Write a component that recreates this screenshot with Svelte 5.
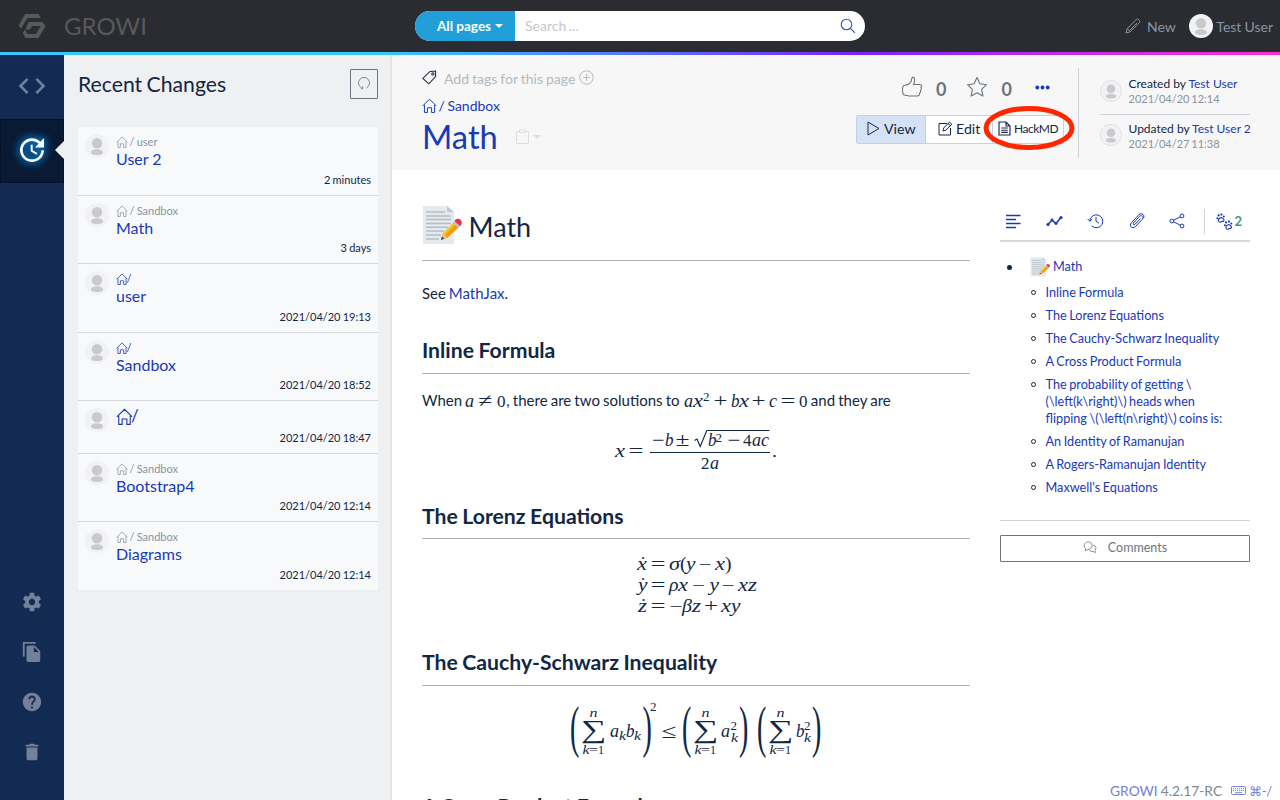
<script>
  const changes = [
    { parent: ' / user', title: 'User 2', time: '2 minutes', h: 69 },
    { parent: ' / Sandbox', title: 'Math', time: '3 days', h: 68 },
    { parent: '/', title: 'user', time: '2021/04/20 19:13', h: 69, link: true },
    { parent: '/', title: 'Sandbox', time: '2021/04/20 18:52', h: 68, link: true },
    { parent: '', title: '/', time: '2021/04/20 18:47', h: 53, root: true },
    { parent: ' / Sandbox', title: 'Bootstrap4', time: '2021/04/20 12:14', h: 68 },
    { parent: ' / Sandbox', title: 'Diagrams', time: '2021/04/20 12:14', h: 68 }
  ];
  const toc = [
    'Inline Formula', 'The Lorenz Equations', 'The Cauchy-Schwarz Inequality', 'A Cross Product Formula',
    'The probability of getting \\(\\left(k\\right)\\) heads when flipping \\(\\left(n\\right)\\) coins is:',
    'An Identity of Ramanujan', 'A Rogers-Ramanujan Identity', "Maxwell's Equations"
  ];

  // Formula glyphs: [text, x, baseline, advance, size, italic]
  const v = (t, x, y, w = 9, s = 18) => [t, x, y, w, s, true];
  const r = (t, x, y, w = 8, s = 17) => [t, x, y, w, s, false];
  const nonzero = [v('a', 1, 17), r('≠', 14, 17, 14, 19), r('0', 33, 17, 8.5)];
  const quadratic = [
    v('a', 1, 17), v('x', 10, 17, 10), r('2', 20, 11, 6.5, 12), r('+', 30.5, 17, 14, 19), v('b', 48, 17, 8.5),
    v('x', 56, 17, 10), r('+', 68.5, 17, 14, 19), v('c', 86, 17, 8), r('=', 97.5, 17, 15, 19), r('0', 116, 17, 8.5)
  ];
  const roots = [
    v('x', 5, 32, 10), r('=', 18.5, 32, 15, 19), r('−', 42, 21, 12.5, 18), v('b', 55, 21, 8.5), r('±', 65.5, 21, 14, 18),
    v('b', 98, 21, 8.5), r('2', 105.5, 16.5, 6.5, 12), r('−', 117.5, 21, 13, 18), r('4', 133, 21, 8.5), v('a', 142, 21),
    v('c', 151, 21, 8), r('2', 91, 44, 8.5), v('a', 100, 44), r('.', 162, 32, 5, 17)
  ];
  const lorenz = [
    v('x', 7, 20, 10), r('˙', 10, 20, 6, 18), r('=', 20.5, 20, 15, 19), v('σ', 39, 20, 11), r('(', 50, 20, 6.5, 19), v('y', 56, 20, 9.5),
    r('−', 68.5, 20, 13), v('x', 85, 20, 10), r(')', 95, 20, 6.5, 19),
    v('y', 8, 41, 9.5), r('˙', 10, 41, 6, 18), r('=', 20.5, 41, 15, 19), v('ρ', 39, 41, 9.5), v('x', 48, 41, 10), r('−', 62, 41, 13),
    v('y', 79.5, 41, 9.5), r('−', 91.5, 41, 13), v('x', 108, 41, 10), v('z', 118, 41, 9),
    v('z', 8, 62, 9), r('˙', 10.5, 62, 6, 18), r('=', 20.5, 62, 15, 19), r('−', 39.5, 62, 13), v('β', 52, 62, 10), v('z', 62, 62, 9),
    r('+', 74, 62, 14, 19), v('x', 91, 62, 10), v('y', 101, 62, 9.5)
  ];
  const sum = (x) => [
    r('∑', x - 1, 38, 25.5, 26), v('n', x + 7.5, 17, 8, 12.5), v('k', x + 0.5, 54, 7, 12.5), r('=', x + 7, 54, 9, 12), r('1', x + 16, 54, 6, 12)
  ];
  const cauchy = [
    ...sum(12), v('a', 40, 37), v('k', 49, 39.5, 7, 12.5), v('b', 56, 37, 8.5), v('k', 64, 39.5, 7, 12.5),
    r('2', 80, 11, 6.5, 12), r('≤', 91.5, 38, 15, 20),
    ...sum(124), v('a', 151, 37), r('2', 160.5, 30, 6.5, 12), v('k', 161, 42, 7, 12.5),
    ...sum(199), v('b', 226, 37, 8.5), r('2', 234, 30, 6.5, 12), v('k', 234, 42, 7, 12.5)
  ];
  // Tall delimiters around the sums: [text, x]
  const delimiters = [['(', 0], [')', 72.5], ['(', 112], [')', 169], ['(', 187], [')', 242]];
</script>

{#snippet home(size)}
  <svg class="home" width={size} height={size} viewBox="0 0 16 16" fill="none" stroke="currentColor" stroke-width="1.05">
    <path d="M.8 8.4 8 1.200l7.200 7.200M2.600 7.200v8.200h3.200v-5h4.400v5h3.200V7.200" />
  </svg>
{/snippet}
{#snippet person(size)}
  <svg class="person" width={size} height={size} viewBox="0 0 24 24">
    <circle cx="12" cy="12" r="12" fill="#f1f2f5" /><circle cx="12" cy="9.300" r="5.200" fill="#cacaca" />
    <path d="M6 18.600c0-2.200 2.600-3.400 6-3.400s6 1.200 6 3.400c0 1.700-2.600 2.500-6 2.500s-6-.8-6-2.500Z" fill="#cacaca" />
  </svg>
{/snippet}
{#snippet memo(size)}
  <svg class="memo" width={size} height={size} viewBox="0 0 40 40">
    <path d="M1 1h24l7 6v32H1Z" fill="#e4eaee" /><path d="M25 1v6h7Z" fill="#bccad2" />
    <path d="M4 7h19M4 11h25M4 14.600h25M4 18.400h25M4 22.200h22M4 26h18M4 30h15M4 34h13" stroke="#b2bec5" stroke-width="1.500" />
    <path d="m19 34 2-6 12-12 5 5-13 12Z" fill="#f9c21a" /><path d="m23 30 12-12 3 3-13 12Z" fill="#ef9b12" />
    <path d="m19 35 2-7 5 5Z" fill="#e5bf8f" /><path d="m19 35 .9-3.400 2.500 2.100Z" fill="#444" />
    <path d="m31 18 2-2.500 5 5-2.300 2.200Z" fill="#b7c4ca" /><path d="M32.500 16c1-2.400 4-3 6-1.200 2 1.900 1.600 4.700-.5 6.200Z" fill="#ef2d43" />
  </svg>
{/snippet}
{#snippet glyphs(items)}
  {#each items as [t, x, y, w, s, it]}
    <text {x} {y} font-size={s} font-style={it ? 'italic' : 'normal'} textLength={w} lengthAdjust="spacingAndGlyphs">{t}</text>
  {/each}
{/snippet}

<div class="app">
  <header>
    <div class="brand">
      <svg width="28" height="26" viewBox="0 0 28 26" fill="#57595b">
        <path d="M7 1h13.500l2.300 4H9.500L3.200 15.500.5 12.700Z" />
        <path d="M10.500 9h14.200l2.800 4-7 12H7.500L4.800 20l2-3.500 2.700 4.500h8.500l4.700-8h-8.500l-2.300 3.500H7.500Z" />
      </svg>
      <span>GROWI</span>
    </div>
    <div class="search">
      <div class="scope">All pages<i class="caret"></i></div>
      <div class="query">Search ...</div>
      <svg width="16" height="16" viewBox="0 0 16 16" fill="none" stroke="#3553c5" stroke-width="1.100"><circle cx="6.500" cy="6.500" r="5.300" /><path d="m10.500 10.500 4.500 4.300" /></svg>
    </div>
    <div class="account">
      <svg width="16" height="16" viewBox="0 0 16 16" fill="none" stroke="#8b95a1"><path d="M1 15l1.300-4.500L11.500 1.300c1.200-1 4.200 1.600 3.100 3.200L5.200 13.800ZM2.300 10.500l3 3.200M12 5 5 12" /></svg>
      <span class="new">New</span>{@render person(24)}<span class="me">Test User</span>
    </div>
  </header>
  <div class="rainbow"></div>

  <div class="columns">
    <nav>
      <div class="tab"><svg width="32" height="32" viewBox="0 0 24 24"><path d="M9.400 16.600L4.800 12l4.600-4.600L8 6l-6 6 6 6 1.400-1.400zm5.200 0l4.600-4.600-4.600-4.600L16 6l6 6-6 6-1.400-1.400z" /></svg></div>
      <div class="tab on"><svg width="32" height="32" viewBox="0 0 24 24"><path d="M21 10.120h-6.780l2.740-2.820c-2.730-2.700-7.150-2.800-9.880-.1-2.730 2.710-2.730 7.080 0 9.790s7.150 2.710 9.880 0C18.320 15.650 19 14.080 19 12.100h2c0 1.980-.88 4.550-2.640 6.290-3.510 3.480-9.210 3.480-12.720 0-3.500-3.470-3.530-9.110-.02-12.580s9.140-3.470 12.650 0L21 3v7.120zM12.500 8v4.250l3.500 2.080-.72 1.210L11 13V8h1.500z" /></svg></div>
      <div class="tools">
        <svg width="22" height="22" viewBox="0 0 24 24"><path d="M19.430 12.980c.04-.32.07-.64.07-.98s-.03-.66-.07-.98l2.110-1.650c.19-.15.24-.42.12-.64l-2-3.460c-.12-.22-.39-.3-.61-.22l-2.490 1c-.52-.4-1.080-.73-1.690-.98l-.38-2.650C14.460 2.180 14.250 2 14 2h-4c-.25 0-.46.180-.49.420l-.38 2.650c-.61.25-1.170.59-1.690.98l-2.490-1c-.23-.09-.49 0-.61.22l-2 3.460c-.13.22-.07.49.12.64l2.110 1.650c-.04.32-.07.65-.07.98s.03.66.07.98l-2.110 1.650c-.19.15-.24.42-.12.64l2 3.460c.12.22.39.3.61.22l2.490-1c.52.4 1.080.73 1.690.98l.38 2.650c.03.24.24.42.49.42h4c.25 0 .46-.18.49-.42l.38-2.650c.61-.25 1.170-.59 1.690-.98l2.490 1c.23.09.49 0 .61-.22l2-3.460c.12-.22.07-.49-.12-.64l-2.110-1.650zM12 15.500c-1.930 0-3.500-1.570-3.500-3.500s1.570-3.500 3.500-3.500 3.500 1.570 3.500 3.500-1.570 3.500-3.500 3.500z" /></svg>
        <svg width="22" height="22" viewBox="0 0 24 24"><path d="M16 1H2v16h2V3h12V1zm-1 4l6 6v10c0 1.100-.9 2-2 2H7.990C6.890 23 6 22.100 6 21V7c0-1.100.89-2 1.990-2h7zm-1 7h5.500L14 6.500V12z" /></svg>
        <svg width="22" height="22" viewBox="0 0 24 24"><path d="M12 2C6.480 2 2 6.480 2 12s4.480 10 10 10 10-4.480 10-10S17.520 2 12 2zm1 17h-2v-2h2v2zm2.070-7.750l-.9.92C13.450 12.900 13 13.500 13 15h-2v-.5c0-1.100.45-2.100 1.170-2.830l1.240-1.260c.37-.36.59-.86.59-1.410 0-1.100-.9-2-2-2s-2 .9-2 2H8c0-2.210 1.790-4 4-4s4 1.790 4 4c0 .88-.36 1.680-.93 2.250z" /></svg>
        <svg width="22" height="22" viewBox="0 0 24 24"><path d="M6 19c0 1.100.9 2 2 2h8c1.100 0 2-.9 2-2V7H6v12zM19 4h-3.500l-1-1h-5l-1 1H5v2h14V4z" /></svg>
      </div>
    </nav>

    <aside>
      <div class="panel-head">
        <h3>Recent Changes</h3>
        <button class="reload" aria-label="Reload"><svg width="14" height="14" viewBox="0 0 14 14" fill="none" stroke="#7d8793"><path d="M4.600 11.900a5.500 5.500 0 1 1 4.800 0M5.300 10.200l.9 2-2.200 1" /></svg></button>
      </div>
      <div class="changes">
        {#each changes as c}
          <div class="change" style:height="{c.h}px">
            {@render person(24)}
            <div class="info">
              {#if c.root}
                <div class="title root">{@render home(17)}{c.title}</div>
              {:else}
                <div class="parent" class:link={c.link}>{@render home(12)}<span>{c.parent}</span></div>
                <div class="title">{c.title}</div>
              {/if}
              <div class="time">{c.time}</div>
            </div>
          </div>
        {/each}
      </div>
    </aside>

    <main>
      <section class="subnav">
        <div class="page-id">
          <div class="tags">
            <svg width="15" height="15" viewBox="0 0 16 16" fill="none" stroke="#16294a" stroke-width="1.100"><path d="M8.500 1.500 14.500 1v6L7.300 14.800.9 9Z" /><circle cx="11.600" cy="4.200" r="1.200" /></svg>
            <span>Add tags for this page</span>
            <svg width="15" height="15" viewBox="0 0 15 15" fill="none" stroke="#b2bac2"><circle cx="7.500" cy="7.500" r="6.700" /><path d="M7.500 4v7M4 7.500h7" /></svg>
          </div>
          <div class="crumb">{@render home(15)}<span>/ Sandbox</span></div>
          <div class="name"><h1>Math</h1>
            <svg width="13" height="15" viewBox="0 0 13 15" fill="none" stroke="#dcdfe2"><path d="M3.500 2.500H.5v12h12v-12h-3M3.500 1h6v2.500h-6Z" /></svg><i class="caret"></i>
          </div>
        </div>
        <div class="actions">
          <div class="reacts">
            <svg width="22" height="22" viewBox="0 0 22 22" fill="none" stroke="#6c757d" stroke-width="1.100"><path d="M1.500 13.500c0-3 .6-4.300 2.500-4.300 2.400 0 3.800-.8 4.700-2l1.500-2.100c.6-1 .1-3.400 1.300-3.700 1.900-.4 2.500 2 2 4l-.8 3.100h6.200c1.800 0 2.200 2 1 3 .8 1 .6 2-.3 2.800.4 1.200 0 2.100-.9 2.600.1 2-.8 3.100-2.500 3.100H8c-1.600 0-2.500-.8-4-.8s-2.500-1.500-2.500-5.700Z" /></svg>
            <b>0</b>
            <svg width="22" height="22" viewBox="0 0 22 22" fill="none" stroke="#6c757d" stroke-width="1.100" stroke-linejoin="round"><path d="m11 1.500 2.900 6.300 6.600.9-4.900 4.700 1.300 6.700-5.900-3.300-5.900 3.300 1.300-6.700L1.500 8.700l6.600-.9Z" /></svg>
            <b>0</b>
            <svg class="more" width="15" height="5" viewBox="0 0 15 5" fill="#1939b7"><circle cx="2.300" cy="2.500" r="1.900" /><circle cx="7.500" cy="2.500" r="1.900" /><circle cx="12.700" cy="2.500" r="1.900" /></svg>
          </div>
          <div class="modes">
            <div class="mode view"><svg width="13" height="15" viewBox="0 0 13 15" fill="none" stroke="#16294a"><path d="m1 1 11 6.500L1 14Z" /></svg>View</div>
            <div class="mode edit"><svg width="15" height="15" viewBox="0 0 15 15" fill="none" stroke="#16294a"><path d="M9 2.500H1v11.500h11.500V7M5 10l.7-3 5.800-6 2.300 2.200L8 9.200ZM10 2.500l2.300 2.200" /></svg>Edit</div>
            <div class="mode hack"><svg width="13" height="15" viewBox="0 0 13 15" fill="none" stroke="#16294a" stroke-width="1.150"><path d="M1 1h7l4 4v9H1ZM8 1v4h4M3.300 7h6.500M3.300 9.200h6.500M3.300 11.400h6.500" /></svg>HackMD</div>
            <svg class="ring" width="92" height="46" viewBox="0 0 92 46"><ellipse cx="46" cy="23" rx="43" ry="19.500" fill="none" stroke="#ff2600" stroke-width="5" /></svg>
          </div>
        </div>
        <div class="authors">
          <div class="author"><span class="ringed">{@render person(20)}</span><div><p>Created by <a href="#u">Test User</a></p><small>2021/04/20 12:14</small></div></div>
          <div class="author"><span class="ringed">{@render person(20)}</span><div><p>Updated by <a href="#u">Test User 2</a></p><small>2021/04/27 11:38</small></div></div>
        </div>
      </section>

      <div class="body">
        <article>
          <div class="h1">{@render memo(40)}<span>Math</span></div>
          <p class="see">See <a href="#m">MathJax</a>.</p>
          <h2>Inline Formula</h2>
          <p class="when">When <svg class="math" width="42" height="24">{@render glyphs(nonzero)}</svg>, there are two solutions to <svg class="math" width="125" height="24">{@render glyphs(quadratic)}</svg> and they are</p>
          <svg class="math display" style:margin-left="188px" width="170" height="54">
            {@render glyphs(roots)}
            <path d="M40 27.500h120M96.500 5.500h63" stroke="currentColor" /><path d="m84.500 15.500 2.500-1.500 3.200 7.500 6.600-16" fill="none" stroke="currentColor" stroke-width="1.100" />
          </svg>
          <h2 class="lor">The Lorenz Equations</h2>
          <svg class="math display" style:margin-left="208px" width="135" height="74">{@render glyphs(lorenz)}</svg>
          <h2 class="cau">The Cauchy-Schwarz Inequality</h2>
          <svg class="math display" style:margin-left="148px" width="256" height="62">
            {@render glyphs(cauchy)}
            {#each delimiters as [t, x]}<text transform="translate({x} 46) scale(1.400 2.850)" font-size="20">{t}</text>{/each}
          </svg>
          <h2 class="cross">A Cross Product Formula</h2>
        </article>

        <div class="side">
          <div class="tabs">
            <svg width="16" height="16" viewBox="0 0 16 16" stroke="#1939b7" stroke-width="1.300"><path d="M1 2.500h14.500M1 6.500h10M1 10.500h14.500M1 14.500h10" /></svg>
            <svg width="17" height="12" viewBox="0 0 17 12" fill="#1939b7"><path d="m2 9.500 4-4.500 4 3.500 5-6" fill="none" stroke="#1939b7" stroke-width="1.600" /><circle cx="2" cy="9.500" r="1.600" /><circle cx="6" cy="5" r="1.400" /><circle cx="10" cy="8.500" r="1.400" /><circle cx="15" cy="2.500" r="1.600" /></svg>
            <svg width="17" height="16" viewBox="0 0 17 16" fill="none" stroke="#1939b7"><path d="M2.800 8a6.500 6.500 0 1 1 2 5M.7 6l2.100 2.300L5.200 6M9 4v4.200l3 2" /></svg>
            <svg width="16" height="16" viewBox="0 0 16 16" fill="none" stroke="#1939b7"><path d="M11.500 5.500 6 11.400c-1.100 1-2.500-.1-1.600-1.400L10.500 3.400c2-2 4.800.4 3 2.700L6.300 13.700c-2.800 2.800-6.800-.7-4-3.900L10 1.600c3-2.500 6.300 1 4.300 3.700" /></svg>
            <svg width="16" height="16" viewBox="0 0 16 16" fill="none" stroke="#1939b7"><circle cx="2.800" cy="8" r="1.900" /><circle cx="13" cy="3" r="1.900" /><circle cx="13" cy="13" r="1.900" /><path d="m4.600 7.200 6.600-3.300M4.600 8.800l6.600 3.300" /></svg>
            <i class="bar"></i>
            <svg width="17" height="17" viewBox="0 0 17 17" fill="none" stroke="#1939b7" stroke-width="1.100">
              <g id="paw"><path d="M2.500 8c-.3-1.700.8-3 2.200-3.300 1.500-.2 2.300.6 3 1.600.7 1 0 2.200-1.200 2-1 0-1.200.7-2.100.9-1 .2-1.700-.2-1.900-1.200Z" /><g fill="#1939b7" stroke="none"><circle cx="1.300" cy="5.300" r="1" /><circle cx="2.600" cy="2.400" r="1.100" /><circle cx="5.400" cy="1.600" r="1.100" /><circle cx="7.800" cy="3.500" r="1" /></g></g>
              <use href="#paw" x="7.500" y="7" />
            </svg>
            <b>2</b>
          </div>
          <div class="toc">
            <div class="top"><i class="dot"></i>{@render memo(20)}<a href="#t">Math</a></div>
            {#each toc as t}<div class="entry"><i class="circle"></i><a href="#t">{t}</a></div>{/each}
          </div>
          <hr />
          <button class="comments"><svg width="14" height="13" viewBox="0 0 14 13" fill="none" stroke="#7b858f" stroke-width=".9"><path d="M2.200 9.800 2.700 7.700A4 3.800 0 1 1 5 8.500ZM10.300 4A3.300 3.300 0 0 1 12 9.500l.3 2.200-2-1.200c-2 .2-3.300-.3-4-1.700" /></svg>Comments</button>
          <footer><a href="#g">GROWI</a> <span>4.2.17-RC</span>
            <svg width="15" height="9" viewBox="0 0 15 9" fill="none" stroke="#7484d4"><rect x=".5" y=".5" width="14" height="8" rx="1" /><path d="M2 2.700h11M2 4.600h11" stroke-dasharray="1.200 .8" /><path d="M4 6.700h7" /></svg><a class="keys" href="#k">⌘-/</a>
          </footer>
        </div>
      </div>
    </main>
  </div>
</div>

<style>
  :global(body) { margin: 0; background: #fff; }
  :global(#app) { height: 800px; overflow: hidden; }
  * { box-sizing: border-box; }
  .app { width: 1280px; height: 800px; overflow: hidden; display: flex; flex-direction: column; font-family: Lato, "Noto Sans", sans-serif; font-size: 15px; color: #112744; }
  a { color: #1939b7; text-decoration: none; }
  h1, h2, h3, p { margin: 0; }
  svg { flex: none; }
  button { font: inherit; background: none; border-radius: 1px; padding: 0; }
  .caret { border: 4px solid transparent; border-top-color: currentColor; border-bottom: 0; }
  header { height: 52px; flex: none; background: #2a2c31; display: grid; grid-template-columns: 415px 450px 1fr; align-items: center; }
  .brand { display: flex; align-items: center; padding-left: 18px; gap: 18px; color: #57595b; font-size: 24px; line-height: 30px; }
  .brand span { margin-top: -1px; }
  .brand svg { margin-top: -1px; }
  .search { display: flex; align-items: center; height: 30px; margin-top: -1px; border-radius: 15px; background: #fff; overflow: hidden; padding-right: 9px; }
  .scope { width: 100px; height: 30px; display: flex; align-items: center; padding-left: 22px; gap: 4px; background: #209fd9; color: #fff; font-weight: 700; font-size: 13.500px; line-height: 32px; }
  .query { flex: 1; padding-left: 10px; color: #c5c7ca; font-size: 14px; line-height: 32px; padding-top: 1px; word-spacing: -1px; }
  .account { display: flex; align-items: center; justify-content: flex-end; padding-right: 7px; font-size: 14px; color: #8b95a1; line-height: 50px; }
  .new { margin: 1px 13.500px 0 6px; } .me { margin: 1px 0 0 3px; word-spacing: -.5px; }
  .rainbow { height: 3px; flex: none; background: linear-gradient(90deg, #38c7fb 30%, #5b70ff 51%, #7a22ff 67%, #b42bf0 79%, #ff2ed6 100%); }
  .columns { flex: 1; display: flex; min-height: 0; }
  nav { width: 64px; background: #132b53; display: flex; flex-direction: column; }
  nav svg { fill: #728099; }
  .tab { height: 64px; display: grid; place-items: center; position: relative; }
  .tab svg { margin-top: -2px; }
  .tab.on { background: #0a1a35; border: 1px solid #061127; }
  .tab.on svg { fill: #fff; margin: -2px 0 0; filter: drop-shadow(0 0 4px #078be0) drop-shadow(0 0 3px #0567b0); }
  .tab.on::after { content: ''; position: absolute; right: -1px; top: 21px; border: 9px solid transparent; border-right-color: #eff0f2; border-left: 0; }
  .tools { margin-top: auto; padding-bottom: 37px; display: flex; flex-direction: column; align-items: center; gap: 28px; }
  aside { width: 328px; background: #eff0f2; padding: 0 14px; border-right: 2px solid #e3e4e7; }
  .panel-head { height: 72px; display: flex; justify-content: space-between; padding-top: 14px; }
  h3 { font-weight: 400; font-size: 21.200px; line-height: 30px; word-spacing: -1px; }
  .reload { width: 28px; height: 30px; border: 1px solid #6c757d; display: grid; place-items: center; padding-bottom: 3px; margin-right: -2px; }
  .changes { width: 300px; }
  .change { display: flex; padding: 7px 7px 0; gap: 7px; background: #f8f9fb; border-bottom: 1px solid #d5d7dc; }
  .change:last-child { border: 0; }
  .info { flex: 1; display: flex; flex-direction: column; padding-bottom: 8px; margin-top: -1px; }
  .parent { display: flex; align-items: center; font-size: 11px; line-height: 17px; color: #8a949f; gap: 1px; word-spacing: -.7px; }
  .parent.link { gap: 0; color: #1939b7; }
  .parent span { white-space: pre; margin-left: -1px; }
  .home { margin-left: -.5px; }
  .title { font-size: 16px; line-height: 18px; color: #1939b7; }
  .title.root { display: flex; align-items: center; font-size: 17px; height: 18px; }
  .root .home { margin-right: -1.500px; }
  .time { margin-top: auto; text-align: right; font-size: 11px; line-height: 15px; word-spacing: -.6px; }
  main { flex: 1; min-width: 0; background: #fff; display: flex; flex-direction: column; }
  .subnav { height: 115px; flex: none; background: #f7f7f7; display: flex; padding: 0 30px; }
  .page-id { flex: 1; padding-top: 14px; }
  .tags { display: flex; align-items: center; font-size: 14px; line-height: 20px; height: 18px; color: #b2bac2; word-spacing: -.6px; }
  .tags span { margin: 2px 4px 0 7px; }
  .tags svg { margin-top: -1px; }
  .crumb { display: flex; align-items: center; gap: 2px; height: 20px; margin-top: 8px; font-size: 14px; color: #1939b7; word-spacing: -1px; }
  .name { display: flex; align-items: center; color: #dcdfe2; }
  h1 { font-weight: 400; font-size: 32.700px; line-height: 44px; color: #1939b7; margin-right: 18px; }
  .name .caret { margin-left: 4px; }
  .name svg { margin-top: -2px; }
  .actions { width: 224px; border-right: 1px solid #cfd3d9; margin: 13px 0 12px; height: 90px; display: flex; flex-direction: column; justify-content: space-between; }
  .reacts { display: flex; align-items: center; padding: 6px 0 0 46px; color: #6c757d; font-size: 18px; }
  .reacts b { margin: 4px 20px 0 13px; line-height: 22px; }
  .reacts .more { margin-left: 3px; }
  .modes { position: relative; display: flex; width: 208px; height: 29px; margin: 0 0 14px 1px; border: 1px solid #bcd2f3; border-radius: 2px; background: #fff; }
  .mode { display: flex; align-items: center; gap: 4px; font-size: 14.200px; border-right: 1px solid #bcd2f3; padding-bottom: 2px; }
  .mode:last-of-type { border: 0; }
  .view { width: 69px; background: #d5e2f6; padding-left: 10px; }
  .edit { width: 67px; padding-left: 12px; gap: 3px; } .hack { padding-left: 5px; font-size: 12px; letter-spacing: -.5px; gap: 3px; }
  .ring { position: absolute; left: 125.500px; top: -11px; }
  .authors { margin: 12px 0 0 21px; width: 150px; }
  .author { display: flex; align-items: center; gap: 6.500px; height: 40px; font-size: 12px; white-space: nowrap; }
  .author:first-child { border-bottom: 1px solid #cfd3d9; height: 48px; }
  .author p { line-height: 17px; } small { display: block; font-size: 11px; line-height: 14px; color: #8a949f; word-spacing: -1px; }
  .ringed { width: 22px; height: 22px; border: 1px solid #dadde1; border-radius: 50%; display: flex; flex: none; }
  .body { display: flex; flex: 1; min-height: 0; padding: 0 30px; gap: 30px; }
  article { width: 548px; }
  .h1 { display: flex; align-items: center; gap: 7px; height: 91px; padding-top: 22px; border-bottom: 1px solid #aab1ba; font-size: 27px; }
  .h1 .memo { margin: -2px 0 0 -.5px; }
  .see { margin-top: 22px; line-height: 20px; height: 21px; word-spacing: -1px; }
  h2 { font-size: 21.200px; line-height: 26px; height: 37px; margin-top: 33px; border-bottom: 1px solid #aab1ba; white-space: nowrap; word-spacing: -.6px; }
  .when { margin-top: 14px; height: 25px; line-height: 24px; white-space: nowrap; word-spacing: -.700px; }
  .math { font-family: "Liberation Serif", serif; fill: currentColor; overflow: visible; vertical-align: -8px; }
  .when .math:first-child { margin-left: -1px; }
  .display { display: block; }
  .when + .display { margin-top: 12px; }
  h2.lor { margin-top: 24px; height: 36px; } .lor + .display { margin-top: 11px; }
  h2.cau { margin-top: 25px; } .cau + .display { margin-top: 14px; }
  h2.cross { margin-top: 31px; }
  .side { width: 250px; display: flex; flex-direction: column; }
  .tabs { margin-top: 30px; height: 42px; display: flex; align-items: center; padding: 2px 7px 0 5px; gap: 24.500px; border-bottom: 2px solid #d3d7de; color: #429a6c; font-size: 13px; flex: none; }
  .bar { width: 1px; flex: none; height: 25px; background: #cfd3d9; margin: 0 -13.500px 0 -6px; }
  .tabs b { margin-left: -22.500px; margin-top: -1px; }
  .toc { padding: 15px 0 0; font-size: 12.700px; line-height: 17px; word-spacing: -.7px; }
  .top { display: flex; align-items: center; height: 20px; margin-bottom: 7px; }
  .dot { width: 5px; height: 5px; border-radius: 50%; background: #112744; margin: 0 18px 0 6.500px; }
  .top a { margin: -2px 0 0 3.500px; }
  .entry { display: flex; padding: 0 14px 0 31px; gap: 9.500px; margin-bottom: 6px; }
  .circle { width: 5px; height: 5px; border: 1px solid #112744; border-radius: 50%; flex: none; margin-top: 6px; }
  hr { width: 100%; border: 0; border-top: 1px solid #cfd3d9; margin: 18px 0 14px; }
  .comments { height: 27px; border: 1px solid #6c757d; display: flex; align-items: center; justify-content: center; gap: 11px; color: #6c757d; font-size: 12.500px; flex: none; padding-bottom: 2px; }
  footer { margin: auto -24px 0 110px; display: flex; align-items: center; height: 19px; gap: 3px; font-size: 13.800px; color: #7c8893; white-space: nowrap; }
  footer a { color: #6f82d3; } footer svg { margin-left: 6px; }
  footer .keys { font-size: 13px; letter-spacing: -.3px; }
</style>
